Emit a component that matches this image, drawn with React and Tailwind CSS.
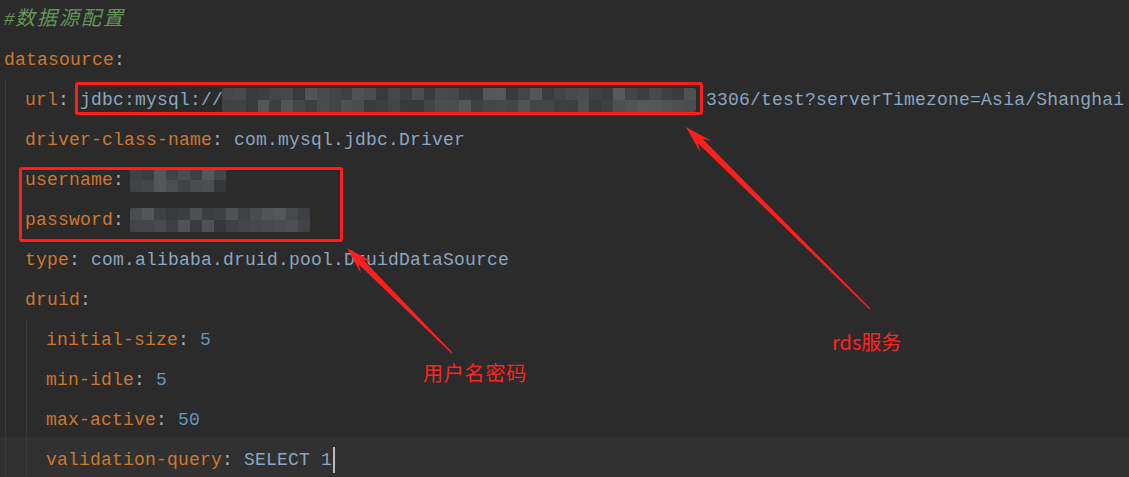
import React from "react";

function mosaic(seed, cols, rows) {
  let s = seed;
  const rnd = () => {
    s = (s * 9301 + 49297) % 233280;
    return s / 233280;
  };
  const cells = [];
  for (let r = 0; r < rows; r++) {
    for (let c = 0; c < cols; c++) {
      const v = Math.round(52 + rnd() * 34);
      cells.push(`rgb(${v},${v + 2},${v + 5})`);
    }
  }
  return cells;
}

function Blur({ width, seed, cols, className = "" }) {
  const cells = mosaic(seed, cols, 2);
  return (
    <span
      className={"inline-grid h-[24px] align-middle overflow-hidden rounded-[2px] " + className}
      style={{ width, gridTemplateColumns: `repeat(${cols}, 1fr)`, gridTemplateRows: "repeat(2, 1fr)" }}
    >
      {cells.map((c, i) => (
        <span key={i} style={{ background: c }} />
      ))}
    </span>
  );
}

const K = ({ children }) => (
  <>
    <span className="text-[#cc7832]">{children}</span>
    <span className="text-[#a9b0b8]">:</span>
  </>
);
const V = ({ children }) => <span className="text-[#8aa6c1]">{children}</span>;
const N = ({ children }) => <span className="text-[#6897bb]">{children}</span>;

function Row({ children, className = "" }) {
  return <div className={"h-[40px] flex items-center whitespace-pre " + className}>{children}</div>;
}

function arrowPoints(tx, ty, px, py) {
  const dx = px - tx, dy = py - ty;
  const len = Math.hypot(dx, dy);
  const ux = dx / len, uy = dy / len;
  const nx = -uy, ny = ux;
  const headLen = 28, neckBack = 20, headW = 8, shaftW = 3.2, tailW = 0.6;
  const at = (d, w) => [tx + ux * d + nx * w, ty + uy * d + ny * w];
  const pts = [
    at(0, tailW),
    at(len - neckBack, shaftW),
    at(len - headLen, headW),
    [px, py],
    at(len - headLen, -headW),
    at(len - neckBack, -shaftW),
    at(0, -tailW),
  ];
  return pts.map((p) => p.map((v) => v.toFixed(1)).join(",")).join(" ");
}

export default function App() {
  return (
    <div
      className="relative w-[1129px] h-[477px] overflow-hidden bg-[#2b2b2b] text-[18px] tracking-[0.2px]"
      style={{ fontFamily: '"Liberation Mono", "Noto Sans CJK SC", monospace' }}
    >
      <div className="pl-[4px]">
        <Row>
          <span className="italic text-[#629755]">
            #<span className="text-[20px] tracking-[2px]">数据源配置</span>
          </span>
        </Row>
        <Row>
          <K>datasource</K>
        </Row>
        <div className="ml-[1px] border-l border-[#3a3a3a] pl-[19px]">
          <Row>
            <K>url</K>
            <span> </span>
            <V>jdbc:mysql://</V>
            <Blur width={474} seed={7} cols={40} className="-ml-[1px]" />
            <V>
              <span className="ml-[10px]">3306/test?serverTimezone=Asia/Shanghai</span>
            </V>
          </Row>
          <Row>
            <K>driver-class-name</K>
            <V> com.mysql.jdbc.Driver</V>
          </Row>
          <Row>
            <K>username</K>
            <Blur width={96} seed={3} cols={8} className="ml-[6px]" />
          </Row>
          <Row>
            <K>password</K>
            <Blur width={180} seed={11} cols={15} className="ml-[6px]" />
          </Row>
          <Row>
            <K>type</K>
            <V> com.alibaba.druid.pool.DruidDataSource</V>
          </Row>
          <Row>
            <K>druid</K>
          </Row>
          <div className="ml-[1px] border-l border-[#3a3a3a] pl-[19px]">
            <Row>
              <K>initial-size</K>
              <span> </span>
              <N>5</N>
            </Row>
            <Row>
              <K>min-idle</K>
              <span> </span>
              <N>5</N>
            </Row>
            <Row>
              <K>max-active</K>
              <span> </span>
              <N>50</N>
            </Row>
          </div>
        </div>
      </div>
      {/* current line */}
      <div className="absolute left-0 right-0 top-[437px] h-[40px] bg-white/[0.03] pointer-events-none" />
      <div className="absolute left-[5px] top-[437px] h-[40px] border-l border-[#3a3a3a]" />
      <div className="absolute left-[26px] top-[437px] h-[40px] border-l border-[#3a3a3a]" />
      <div className="absolute left-[46px] top-[440px] h-[40px] flex items-center whitespace-pre">
        <K>validation-query</K>
        <V> SELECT 1</V>
        <span className="ml-[1px] w-[2px] h-[26px] bg-[#bbbbbb]" />
      </div>

      {/* annotations */}
      <div className="absolute left-[75px] top-[82px] w-[628px] h-[33px] border-[3px] border-[#ff1e1e] rounded-[3px]" />
      <div className="absolute left-[19px] top-[167px] w-[324px] h-[75px] border-[3px] border-[#ff1e1e] rounded-[3px]" />
      <svg className="absolute inset-0 pointer-events-none" width="1129" height="477">
        <polygon points={arrowPoints(870, 309, 686, 127)} fill="#ff1e1e" />
        <polygon points={arrowPoints(452, 353, 347, 248)} fill="#ff1e1e" />
      </svg>
      <div
        className="absolute left-[832px] top-[328px] text-[20px] leading-[28px] text-[#ff2222] tracking-normal"
        style={{ fontFamily: '"Noto Sans CJK SC", "Noto Sans", sans-serif' }}
      >
        rds服务
      </div>
      <div
        className="absolute left-[423px] top-[359px] text-[20px] leading-[28px] text-[#ff2222] tracking-[0.8px]"
        style={{ fontFamily: '"Noto Sans CJK SC", "Noto Sans", sans-serif' }}
      >
        用户名密码
      </div>
    </div>
  );
}
